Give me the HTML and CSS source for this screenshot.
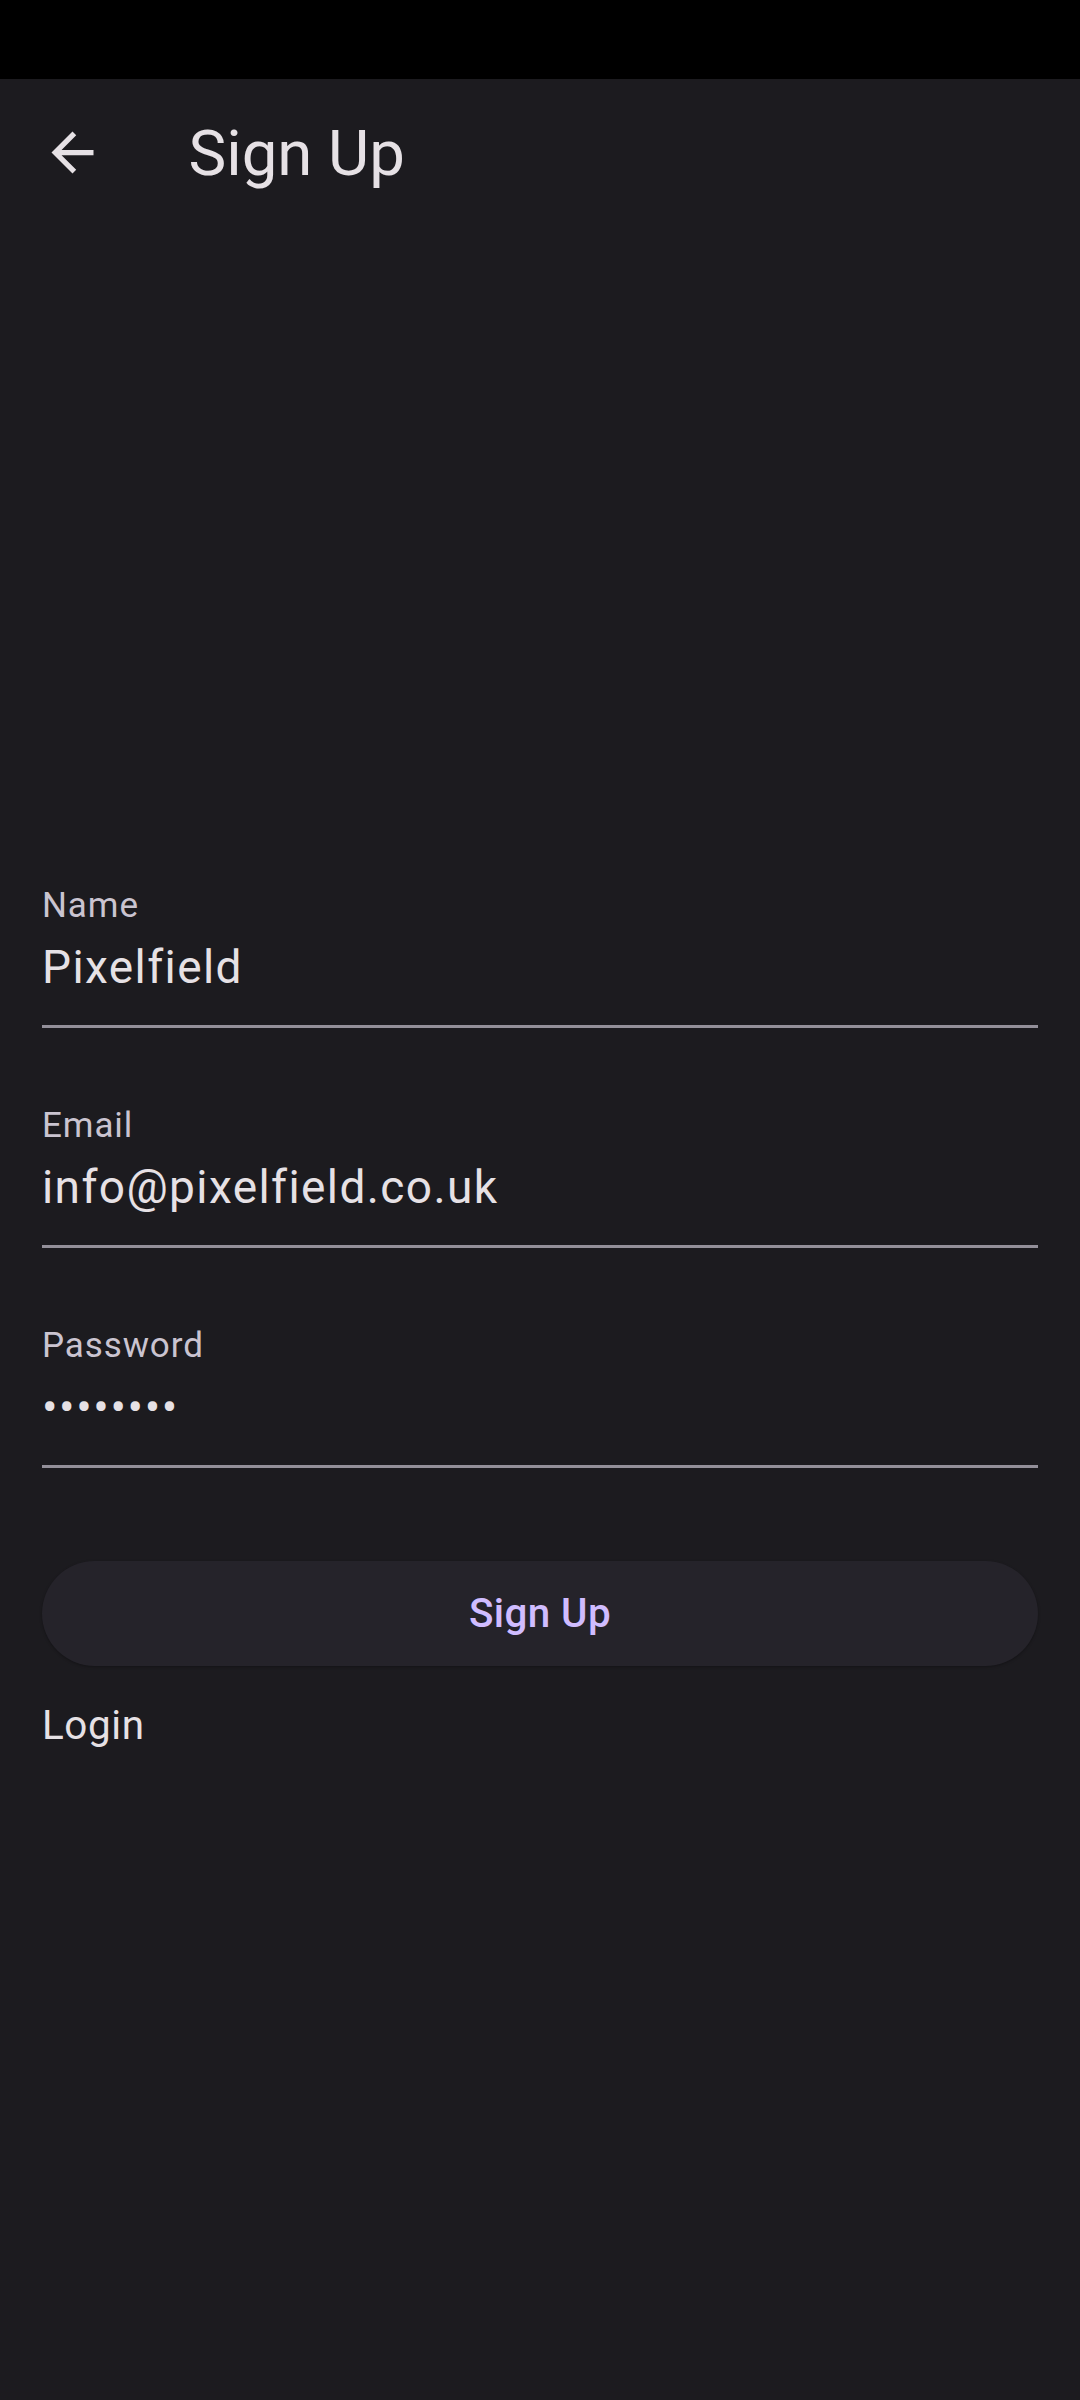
FILE: index.html
```html
<!DOCTYPE html>
<html lang="en">
<head>
<meta charset="utf-8">
<title>Sign Up</title>
<link rel="stylesheet" href="styles.css">
</head>
<body>
<div class="status-bar"></div>
<header class="app-bar">
  <button class="back" aria-label="Back">
    <svg viewBox="0 0 24 24" width="63" height="63"><path d="M20 11H7.83l5.59-5.59L12 4l-8 8 8 8 1.41-1.41L7.83 13H20v-2z"/></svg>
  </button>
  <h1 class="title">Sign Up</h1>
</header>
<main class="content">
  <div class="field">
    <div class="label">Name</div>
    <div class="value">Pixelfield</div>
  </div>
  <div class="field">
    <div class="label">Email</div>
    <div class="value">info@pixelfield.co.uk</div>
  </div>
  <div class="field">
    <div class="label">Password</div>
    <div class="value dots">••••••••</div>
  </div>
  <button class="primary">Sign Up</button>
  <div class="login">Login</div>
</main>
</body>
</html>
```
FILE: styles.css
```css
html, body {
  margin: 0;
  padding: 0;
}
body {
  width: 1080px;
  height: 2400px;
  overflow: hidden;
  background: #1c1b1f;
  font-family: Roboto, "Noto Sans", sans-serif;
  color: #e6e1e5;
}
.status-bar {
  height: 79px;
  background: #000;
}
.app-bar {
  height: 147px;
  display: flex;
  align-items: center;
}
.back {
  width: 63px;
  height: 63px;
  margin-left: 40.5px;
  padding: 0;
  border: 0;
  background: none;
  display: flex;
}
.back svg {
  fill: #e6e1e5;
}
.title {
  margin: 0 0 0 85px;
  padding-top: 2px;
  font-size: 63.5px;
  line-height: 76px;
  font-weight: 400;
  color: #e6e1e5;
}
.content {
  padding: 660px 42px 0 42px;
  display: flex;
  flex-direction: column;
}
.field {
  padding-bottom: 30px;
  border-bottom: 3px solid #938f99;
}
.field + .field {
  margin-top: 78px;
}
.label {
  font-size: 35px;
  line-height: 40px;
  letter-spacing: 0.9px;
  color: #cac4d0;
  margin-bottom: 13px;
}
.value {
  font-size: 46px;
  line-height: 56px;
  letter-spacing: 1.4px;
  color: #e6e1e5;
}
.dots {
  letter-spacing: 1.6px;
}
.primary {
  margin-top: 93px;
  height: 105px;
  border: 0;
  border-radius: 53px;
  background: #25232a;
  box-shadow: 0 1px 3px rgba(0, 0, 0, 0.3);
  color: #d0bcff;
  font-family: Roboto, "Noto Sans", sans-serif;
  font-weight: 500;
  font-size: 40.4px;
  line-height: 105px;
  letter-spacing: 0.4px;
  padding: 0;
}
.login {
  margin-top: 35.5px;
  font-size: 40.4px;
  line-height: 48px;
  letter-spacing: 0.6px;
  color: #e6e1e5;
}
```
